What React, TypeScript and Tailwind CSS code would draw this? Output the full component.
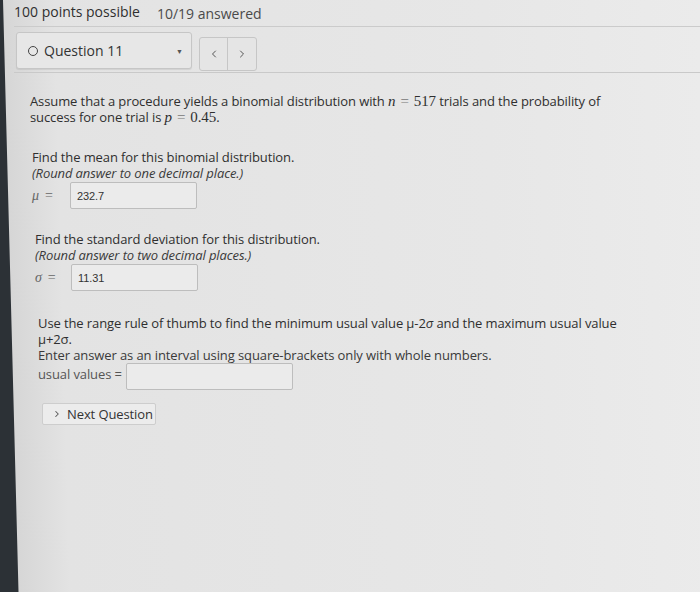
import React from 'react';
import { ChevronLeft, ChevronRight } from 'lucide-react';

const serif = "font-['Liberation_Serif','DejaVu_Serif',serif] leading-none";

const AnswerBox: React.FC<{ value?: string; width: string }> = ({ value, width }) => (
  <div
    className={`${width} h-[27px] flex items-center pl-[6px] bg-[#ebebeb] border border-[#bdbdbd] rounded-[2px] text-[11px] text-[#333] font-['Liberation_Sans','Arial',sans-serif]`}
  >
    {value}
  </div>
);

const App: React.FC = () => {
  return (
    <div className="w-[700px] h-[592px] overflow-hidden bg-[linear-gradient(88.5deg,#2c3136_18px,#d6d6d6_19px,#e3e3e3_70px,#e7e7e7_70%,#ebebeb)] font-['Open_Sans','Noto_Sans',sans-serif] text-[#2f2f2f]">
      {/* Top status + question selector */}
      <div className="pl-[14px]">
        <div className="h-[22px] flex items-center">
          <span className="text-[14px]">100 points possible</span>
          <span className="ml-[17px] mt-[4px] text-[14px] text-[#4a4a4a]">10/19 answered</span>
        </div>
        <div className="mt-[4px] h-px bg-[#cbcbcb]" />

        <div className="mt-[5px] flex items-start">
          <div className="ml-[2px] w-[176px] h-[37px] flex items-center bg-[#e7e7e7] border border-[#c6c6c6] rounded-[3px] shadow-[0_1px_1px_rgba(0,0,0,0.08)]">
            <span className="ml-[11px] w-[10px] h-[10px] rounded-full border-[1.5px] border-[#444]" />
            <span className="ml-[6px] text-[14px] text-[#333]">Question 11</span>
            <span className="ml-auto mr-[8px] mt-[3px] text-[7px] text-[#555]">▼</span>
          </div>
          <div className="ml-[7px] mt-[5px] h-[34px] flex bg-[#e5e5e5] border border-[#c6c6c6] rounded-[3px]">
            <div className="w-[28px] flex items-center justify-center border-r border-[#c6c6c6] text-[#555]">
              <ChevronLeft size={12} strokeWidth={2} />
            </div>
            <div className="w-[28px] flex items-center justify-center text-[#555]">
              <ChevronRight size={12} strokeWidth={2} />
            </div>
          </div>
        </div>
        <div className="mt-[1px] h-px bg-[#c9c9c9]" />
      </div>

      {/* Question body */}
      <div className="pl-[30px] text-[13px] leading-[16px] tracking-[-0.1px]">
        <p className="mt-[20px]">
          Assume that a procedure yields a binomial distribution with{' '}
          <span className={`${serif} text-[15px]`}>
            <i>n</i>
            <span className="mx-[5px] text-[#777]">=</span>517
          </span>{' '}
          trials and the probability of
          <br />
          success for one trial is{' '}
          <span className={`${serif} text-[15px]`}>
            <i>p</i>
            <span className="mx-[5px] text-[#777]">=</span>0.45
          </span>
          .
        </p>

        <div className="mt-[24px] ml-[2px]">
          <p>Find the mean for this binomial distribution.</p>
          <p className="italic text-[#3a3a3a]">(Round answer to one decimal place.)</p>
          <div className="mt-[1px] flex items-center">
            <span className={`${serif} w-[38px] text-[14px] text-[#666]`}>
              <i>μ</i>
              <span className="ml-[6px]">=</span>
            </span>
            <AnswerBox value="232.7" width="w-[127px]" />
          </div>
        </div>

        <div className="mt-[22px] ml-[5px]">
          <p>Find the standard deviation for this distribution.</p>
          <p className="italic text-[#3a3a3a]">(Round answer to two decimal places.)</p>
          <div className="mt-[1px] flex items-center">
            <span className={`${serif} w-[36px] text-[14px] text-[#666]`}>
              <i>σ</i>
              <span className="ml-[6px]">=</span>
            </span>
            <AnswerBox value="11.31" width="w-[127px]" />
          </div>
        </div>

        <div className="mt-[24px] ml-[8px]">
          <p>
            Use the range rule of thumb to find the minimum usual value μ-2<i>σ</i> and the maximum usual value
            <br />
            μ+2σ.
          </p>
          <p className="text-[#3a3a3a]">Enter answer as an interval using square-brackets only with whole numbers.</p>
          <div className="flex items-start">
            <span className="mt-[3px] text-[#555]">usual values =</span>
            <div className="ml-[4px]">
              <AnswerBox width="w-[167px]" />
            </div>
          </div>
        </div>

        <div className="mt-[13px] ml-[12px]">
          <button className="h-[22px] w-[114px] whitespace-nowrap flex items-center pl-[9px] bg-[#ececec] border border-[#cdcdcd] rounded-[2px] text-[13px] text-[#333]">
            <ChevronRight size={10} strokeWidth={2.5} className="text-[#555] shrink-0" />
            <span className="ml-[5px]">Next Question</span>
          </button>
        </div>
      </div>
    </div>
  );
};

export default App;
